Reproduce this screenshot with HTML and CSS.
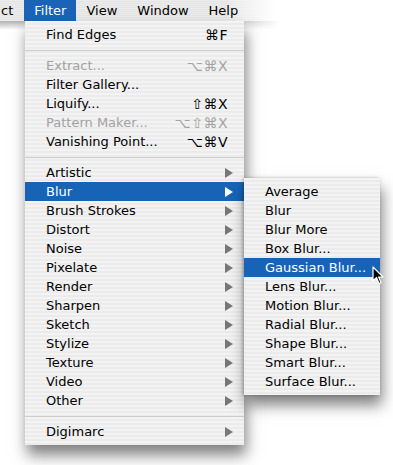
FILE: index.html
```html
<!DOCTYPE html>
<html lang="en">
<head>
    <meta charset="UTF-8">
    <title>Filter Menu</title>
    <link rel="stylesheet" href="styles.css">
</head>
<body>

<!-- ===================== MENU BAR ===================== -->
<div class="menubar">
    <span class="bar-item bar-cut">ct</span>
    <span class="bar-item active">Filter</span>
    <span class="bar-item">View</span>
    <span class="bar-item">Window</span>
    <span class="bar-item">Help</span>
</div>

<!-- ===================== FILTER MENU ===================== -->
<div class="menu main-menu">
    <div class="row"><span>Find Edges</span><span class="key">⌘F</span></div>
    <div class="sep"></div>
    <div class="row disabled"><span>Extract...</span><span class="key">⌥⌘X</span></div>
    <div class="row"><span>Filter Gallery...</span></div>
    <div class="row"><span>Liquify...</span><span class="key">⇧⌘X</span></div>
    <div class="row disabled"><span>Pattern Maker...</span><span class="key">⌥⇧⌘X</span></div>
    <div class="row"><span>Vanishing Point...</span><span class="key">⌥⌘V</span></div>
    <div class="sep"></div>
    <div class="row"><span>Artistic</span><span class="arrow"></span></div>
    <div class="row selected"><span>Blur</span><span class="arrow"></span></div>
    <div class="row"><span>Brush Strokes</span><span class="arrow"></span></div>
    <div class="row"><span>Distort</span><span class="arrow"></span></div>
    <div class="row"><span>Noise</span><span class="arrow"></span></div>
    <div class="row"><span>Pixelate</span><span class="arrow"></span></div>
    <div class="row"><span>Render</span><span class="arrow"></span></div>
    <div class="row"><span>Sharpen</span><span class="arrow"></span></div>
    <div class="row"><span>Sketch</span><span class="arrow"></span></div>
    <div class="row"><span>Stylize</span><span class="arrow"></span></div>
    <div class="row"><span>Texture</span><span class="arrow"></span></div>
    <div class="row"><span>Video</span><span class="arrow"></span></div>
    <div class="row"><span>Other</span><span class="arrow"></span></div>
    <div class="sep"></div>
    <div class="row"><span>Digimarc</span><span class="arrow"></span></div>
</div>

<!-- ===================== BLUR SUBMENU ===================== -->
<div class="menu sub-menu">
    <div class="row"><span>Average</span></div>
    <div class="row"><span>Blur</span></div>
    <div class="row"><span>Blur More</span></div>
    <div class="row"><span>Box Blur...</span></div>
    <div class="row selected"><span>Gaussian Blur...</span></div>
    <div class="row"><span>Lens Blur...</span></div>
    <div class="row"><span>Motion Blur...</span></div>
    <div class="row"><span>Radial Blur...</span></div>
    <div class="row"><span>Shape Blur...</span></div>
    <div class="row"><span>Smart Blur...</span></div>
    <div class="row"><span>Surface Blur...</span></div>
</div>

<!-- cursor -->
<svg class="cursor" width="12" height="19" viewBox="0 0 12 19">
    <path d="M1 1 L1 15 L4.5 11.5 L7 17.5 L9 16.6 L6.6 11 L11 11 Z" fill="#000" stroke="#fff" stroke-width="1.2" stroke-linejoin="round"/>
</svg>

</body>
</html>
```

FILE: styles.css
```css
body {
    margin: 0;
    width: 393px;
    height: 465px;
    overflow: hidden;
    background: #fff;
    font-family: "DejaVu Sans", sans-serif;
    font-size: 13px;
    color: #000;
    position: relative;
}

/* menu bar, fades out to the right */
.menubar {
    height: 21px;
    display: flex;
    align-items: stretch;
    background:
        linear-gradient(to right, rgba(255,255,255,0) 0, rgba(255,255,255,0) 225px, #fff 275px),
        repeating-linear-gradient(#ececec 0 1px, #e4e4e4 1px 2px);
    position: relative;
}
.menubar::after {
    content: "";
    position: absolute;
    left: 0;
    right: 0;
    top: 21px;
    height: 9px;
    background:
        linear-gradient(to right, rgba(255,255,255,0) 0, rgba(255,255,255,0) 225px, #fff 280px),
        linear-gradient(rgba(0,0,0,0.3), rgba(0,0,0,0));
}

.bar-item {
    display: flex;
    align-items: center;
    padding: 0 10px;
}
.bar-cut { padding-left: 1px; padding-right: 11px; }
.bar-item.active {
    background: #1a63b6;
    color: #fff;
}

/* menus */
.menu {
    position: absolute;
    display: flex;
    flex-direction: column;
    padding: 4px 0;
    box-sizing: border-box;
    background: repeating-linear-gradient(#f3f3f3 0 2px, #ebebeb 2px 4px);
    box-shadow: 2px 10px 14px rgba(0,0,0,0.5);
    z-index: 2;
}
.main-menu {
    left: 25px;
    top: 21px;
    width: 219px;
    height: 424px;
}
.sub-menu {
    left: 244px;
    top: 178px;
    width: 136px;
    height: 217px;
    z-index: 3;
    box-shadow: 2px 10px 14px rgba(0,0,0,0.5), -1px 0 3px rgba(0,0,0,0.25);
}

.row {
    height: 19px;
    display: flex;
    align-items: center;
    justify-content: space-between;
    padding: 0 11px 0 21px;
    white-space: nowrap;
}
.row.disabled { color: #a2a2a2; }
.row.selected {
    background: #1764b6;
    color: #fff;
}
.key { margin-right: 5px; font-size: 14px; letter-spacing: 0.5px; }

.arrow {
    width: 0;
    height: 0;
    border-top: 5px solid transparent;
    border-bottom: 5px solid transparent;
    border-left: 8px solid #777;
}
.row.selected .arrow { border-left-color: #fff; }

.sep {
    height: 12px;
    display: flex;
    align-items: center;
}
.sep::before {
    content: "";
    flex: 1;
    height: 1px;
    background: #cdcdcd;
}

.cursor {
    position: absolute;
    left: 372px;
    top: 266px;
    z-index: 5;
}
```
